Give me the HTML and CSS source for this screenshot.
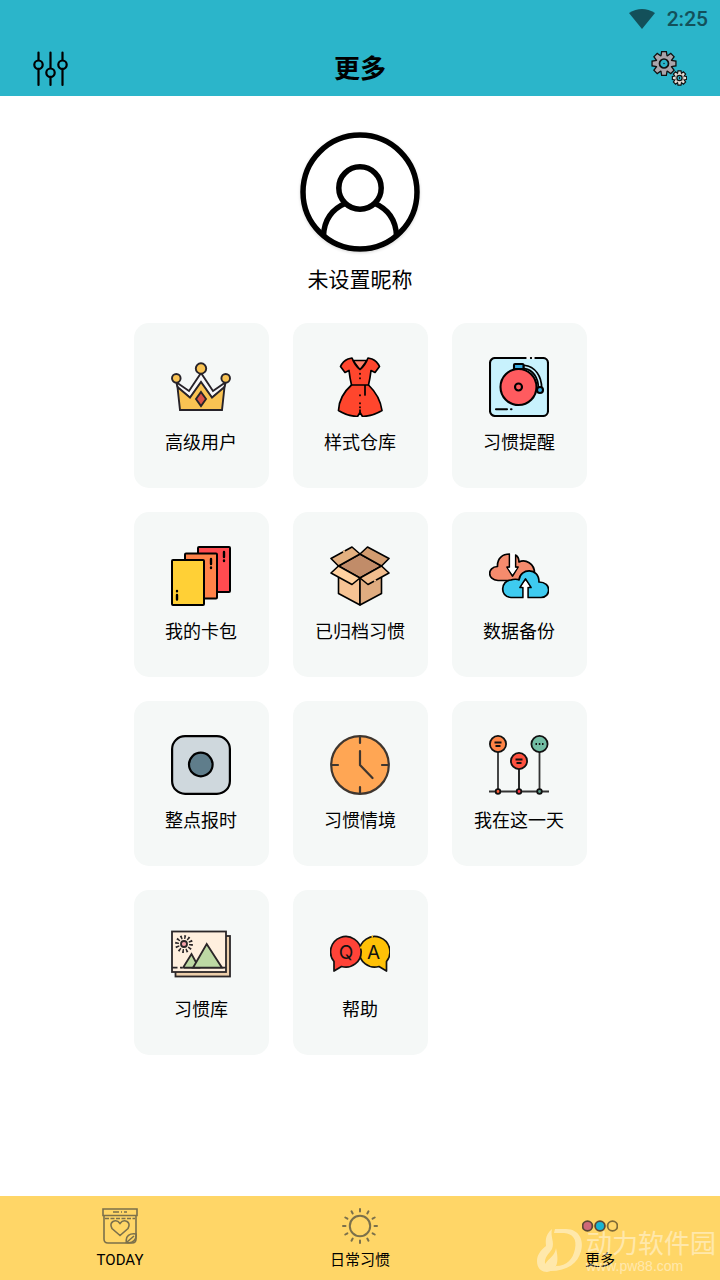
FILE: index.html
```html
<!DOCTYPE html>
<html lang="zh-CN">
<head>
	<meta charset="UTF-8">
	<meta name="viewport" content="width=device-width, initial-scale=1.0">
	<title>更多</title>
	<link rel="stylesheet" href="styles.css">
</head>
<body>
	<header>
		<div class="status-bar">
			<svg class="wifi" viewBox="0 0 26 21" aria-hidden="true"><path d="M0 4Q13-4 26 4L13 20Z" fill="#13505a"/></svg>
			<span class="time">2:25</span>
		</div>
		<div class="title-bar">
			<button class="icon-button" aria-label="筛选">
				<svg viewBox="0 0 36 36" fill="none" stroke="#000" stroke-width="2.2" stroke-linecap="round">
					<path d="M5.500 1.500V9M5.500 18.500V34M17.500 1.500V17M17.500 26.500V34M29.500 1.500V9M29.500 18.500V34"/>
					<circle cx="5.500" cy="13.700" r="4.200"/><circle cx="17.500" cy="21.700" r="4.200"/><circle cx="29.500" cy="13.700" r="4.200"/>
				</svg>
			</button>
			<h1>更多</h1>
			<button class="icon-button" aria-label="设置">
				<svg viewBox="0 0 36 36">
					<defs>
						<g id="teeth">
							<path id="tooth" d="M-2.500-7L-1.800-11.300H1.800L2.500-7M-2.500 7L-1.800 11.300H1.800L2.500 7"/>
							<use href="#tooth" transform="rotate(45)"/>
							<use href="#tooth" transform="rotate(90)"/>
							<use href="#tooth" transform="rotate(135)"/>
						</g>
					</defs>
					<g transform="translate(13 12.500)">
						<use href="#teeth" fill="#aaa5ab" stroke="#111" stroke-width="2.600"/>
						<circle r="8.500" fill="#aaa5ab" stroke="#111" stroke-width="1.700"/>
						<use href="#teeth" fill="#aaa5ab"/>
						<circle r="4.500" fill="#2bb5ca" stroke="#111" stroke-width="1.700"/>
						<circle r=".7" fill="#111"/>
					</g>
					<g transform="translate(28.500 27) scale(.58)">
						<use href="#teeth" fill="#e5dfd8" stroke="#111" stroke-width="4"/>
						<circle r="8.500" fill="#e5dfd8" stroke="#111" stroke-width="2.500"/>
						<use href="#teeth" fill="#e5dfd8"/>
						<circle r="4.500" fill="#2bb5ca" stroke="#111" stroke-width="2.200"/>
						<path d="M0-2V2" stroke="#111" stroke-width="1.500"/>
					</g>
				</svg>
			</button>
		</div>
	</header>
	<main>
		<section class="profile">
			<button class="avatar" aria-label="头像">
				<svg viewBox="0 0 120 120" fill="none" stroke="#000" stroke-width="5.500">
					<circle cx="60" cy="60" r="57"/>
					<circle cx="60" cy="56" r="21.200"/>
					<path d="M23.500 104C24 88 32 77 46 71M96.500 104C96 88 88 77 74 71"/>
				</svg>
			</button>
			<p class="nickname">未设置昵称</p>
		</section>
		<section class="menu">
			<button class="card">
				<svg viewBox="0 0 60 60" stroke="#272329" stroke-width="1.900">
					<path fill="#f8f8fa" d="M5 25L18 34 30 16 42 34 55 25 53 31 41 41 30 26 19 41 7 31Z"/>
					<path fill="#f9c353" d="M6.500 30L19 40.500 30 25 41 40.500 53.500 30 51 53H9Z"/>
					<path fill="#d95247" d="M30 35L35 42 30 49 25 42Z"/>
					<circle fill="#f9c353" cx="30" cy="11.500" r="5.200"/>
					<circle fill="#f9c353" cx="5.300" cy="21.300" r="4.300"/>
					<circle fill="#f9c353" cx="54.700" cy="21.300" r="4.300"/>
				</svg>
				<span>高级用户</span>
			</button>
			<button class="card">
				<svg viewBox="0 0 60 60" stroke="#000" stroke-width="1.700" stroke-linejoin="round" stroke-linecap="round">
					<path fill="#ff8069" d="M23 3.500H37L30 13Z"/>
					<path fill="#ff462d" d="M22 1L18 2Q13 4 10.500 9.500L15 15.500 19 13.500Q20 22 21.500 28Q9 39 8.500 53.500Q17 59 27.500 59.500L30 55.500 32.500 59.500Q43 59 52 53.500Q50 39 38.500 28Q40 22 41 13.500L45 15.500 49.500 9.500Q47 4 42 2L38 1Q35 9 30 12.500Q25 9 22 1Z"/>
					<path fill="none" d="M21.500 28H38.500M35 28V38M30 55V53"/>
					<path fill="none" d="M30 16.500V17M30 21V21.500M30 38V38.500M30 46V46.500M30 50V50.500"/>
				</svg>
				<span>样式仓库</span>
			</button>
			<button class="card">
				<svg viewBox="0 0 60 60" stroke="#000" stroke-width="2.100" stroke-linecap="round" stroke-linejoin="round">
					<rect x="1" y="1" width="58" height="58" rx="5" fill="#c8f2fd"/>
					<path d="M38.500 1H40M44 1H44.500" stroke="#f5f8f7" stroke-width="2.400"/>
					<circle cx="29.500" cy="30" r="18" fill="#ff5b5f"/>
					<circle cx="29.500" cy="30" r="3.500" fill="#ff5b5f"/>
					<path d="M35 10C45 11 51 20 51 31" fill="none" stroke-width="5"/>
					<path d="M36 10C45 11 51 20 51 31" fill="none" stroke="#c8f2fd" stroke-width="1.500"/>
					<path d="M25 12V8Q25 7 26 7H33.500Q34.500 7 34.500 8V12Z" fill="#37ace1"/>
					<circle cx="51" cy="33" r="3" fill="#37ace1"/>
					<path d="M7 52.300H18M22 52.300H22.500"/>
				</svg>
				<span>习惯提醒</span>
			</button>
			<button class="card">
				<svg viewBox="0 0 60 60" stroke="#000" stroke-width="2" stroke-linecap="round">
					<rect x="27" y="1" width="32" height="45" rx="1" fill="#ff4b50"/>
					<path d="M53 6V11M53 14.500V15" stroke-width="2.400"/>
					<rect x="14" y="7.500" width="32" height="45" rx="1" fill="#ff8249"/>
					<path d="M40 13V18M40 21.500V22" stroke-width="2.400"/>
					<rect x="1" y="14" width="32" height="45" rx="1" fill="#ffd036"/>
					<path d="M6 45V45.300M6 49V53.500" stroke-width="2.400"/>
				</svg>
				<span>我的卡包</span>
			</button>
			<button class="card">
				<svg viewBox="0 0 60 60" stroke="#000" stroke-width="1.600" stroke-linejoin="round">
					<path fill="#f6c394" d="M8.500 20L30 32V59L8.500 47.500Z"/>
					<path fill="#e0ac80" d="M51.500 20L30 32V59L51.500 47.500Z"/>
					<path fill="#c18c69" d="M30 8L51.500 20 30 32 8.500 20Z"/>
					<path fill="#e3b080" d="M30 8L22 1 1 12.500 8.500 20Z"/>
					<path fill="#d29c70" d="M30 8L37.500 1 59 12.500 51.500 20Z"/>
					<path fill="#ffd1a0" d="M8.500 20L1 27 22 38.500 30 32Z"/>
					<path fill="#f1bd8e" d="M51.500 20L59 27 38 38.500 30 32Z"/>
					<path stroke="#e3b080" stroke-width="2" d="M13 6L15 4.900"/>
					<path stroke="#f1bd8e" stroke-width="2" d="M44 35.200L46 34"/>
				</svg>
				<span>已归档习惯</span>
			</button>
			<button class="card">
				<svg viewBox="0 0 60 60" stroke="#000" stroke-width="1.700" stroke-linejoin="round">
					<path fill="#f58b6d" d="M9 34.500C-2 34 -2 21 8.500 20.500C8 12 14 8 20.500 8V21H18L23.500 30 29 21H26.500V9Q30 11 30 16C36 13 46 17 45.500 28Q43 34.500 36 34.500Z"/>
					<path fill="#fff" stroke="none" d="M21.300 7H25.700V22H28L23.500 28.500 19 22H21.300Z"/>
					<path fill="#3ecbf0" d="M22 51.500C10 51 12 34 22 34C24 33 29 33 30 34C31 22 50 21 50 36C63 36 62 51.500 52 51.500H39V41.500H42L36.500 33 31 41.500H34V51.500Z"/>
					<path fill="#fff" stroke="none" d="M34.800 53V40.500H32.500L36.500 34.500 40.500 40.500H38.200V53Z"/>
				</svg>
				<span>数据备份</span>
			</button>
			<button class="card">
				<svg viewBox="0 0 60 60" stroke="#000" stroke-width="2.200">
					<rect x="1.100" y="1.100" width="57.800" height="57.800" rx="13" fill="#cfd8dd"/>
					<circle cx="29.800" cy="29.500" r="11.800" fill="#5f7d8b"/>
				</svg>
				<span>整点报时</span>
			</button>
			<button class="card">
				<svg viewBox="0 0 60 60" fill="none" stroke="#3f362f" stroke-width="2.200" stroke-linecap="round">
					<circle cx="30" cy="30" r="28.800" fill="#ffa654"/>
					<path d="M30 2V8M30 52V58M2 30H8M52 30H58M30 16V30L42.500 43"/>
				</svg>
				<span>习惯情境</span>
			</button>
			<button class="card">
				<svg viewBox="0 0 60 60" stroke="#111" stroke-width="1.800">
					<path d="M0 56.500H60M9 17V56M50.500 17V56" stroke="#333"/>
					<path d="M30 34V56"/>
					<circle cx="9" cy="9" r="8.100" fill="#ff8446"/>
					<circle cx="30" cy="26" r="8.100" fill="#ff513f"/>
					<circle cx="50.500" cy="9" r="8.100" fill="#72bda4"/>
					<path d="M5.500 7.500H12.500M6.500 11H11.500M26.500 24.500H33.500M27.500 28H32.500"/>
					<path d="M46.500 9H48M49.800 9H51.300M53 9H54.500"/>
					<circle cx="9" cy="56.500" r="2.300" fill="#ff633c"/>
					<circle cx="30" cy="56.500" r="2.300" fill="#ff3944"/>
					<circle cx="50.500" cy="56.500" r="2.300" fill="#5b9a88"/>
				</svg>
				<span>我在这一天</span>
			</button>
			<button class="card">
				<svg viewBox="0 0 60 60" stroke="#2b2628" stroke-width="1.800">
					<rect x="4.500" y="12" width="54.500" height="40.500" fill="#edcfab"/>
					<rect x="1" y="7.500" width="54" height="40.500" fill="#ffefde"/>
					<path d="M1 43.700H6.500M9 43.700H11M13 43.700H55"/>
					<path fill="#bdd9a4" d="M12 43.700L20.500 30 28 43.700Z"/>
					<path fill="#bdd9a4" d="M22 43.700L35.700 20 51 43.700Z"/>
					<circle cx="13" cy="20" r="3" fill="#f7a3ac"/>
					<circle cx="13" cy="20" r="7" fill="none" stroke-width="3.800" stroke-dasharray="1.600 2.065"/>
				</svg>
				<span>习惯库</span>
			</button>
			<button class="card">
				<svg viewBox="0 0 60 60" stroke="#111" stroke-width="1.700" stroke-linejoin="round">
					<path fill="#ffc107" d="M56.500 37.500A15.300 15.300 0 1 0 49 42.500L56.500 47Z"/>
					<path fill="#ff4338" d="M4 37.500A15.300 15.300 0 1 1 11.500 42.500L4 47Z"/>
					<path d="M30.800 22.500L31.500 24.500M41.500 12.700H43" stroke="#ffc107" stroke-width="2.200"/>
					<text class="letter" x="16" y="35">Q</text>
					<text class="letter" x="43.500" y="35">A</text>
				</svg>
				<span>帮助</span>
			</button>
		</section>
	</main>
	<nav>
		<a href="#today">
			<svg viewBox="0 0 36 36" fill="none" stroke="#7b704b" stroke-width="1.600">
				<path d="M1 1H35V7.500H1ZM2 7.500V31Q2 35 6 35H30Q34 35 34 31V7.500"/>
				<path d="M3 10.500H33" stroke-dasharray="4 1.500"/>
				<path d="M11 4H17M19 4H20M22 4H25"/>
				<path d="M18 27.500L10 20.500C6 14 14 10 18 15.500C22 10 30 14 26 20.500Z"/>
				<path d="M24.500 34.500C23 28 28 25 34 26C35 31 31 36 24.500 34.500L32 28"/>
			</svg>
			<span>TODAY</span>
		</a>
		<a href="#habits">
			<svg viewBox="0 0 36 36" fill="none" stroke="#7b704b" stroke-width="2" stroke-linecap="round">
				<circle cx="18" cy="18" r="10.200"/>
				<path d="M18 1V3.500M18 32.500V35M1 18H3.500M32.500 18H35M9.500 3.300L10.700 5.400M25.300 30.600L26.500 32.700M3.300 9.500L5.400 10.700M30.600 25.300L32.700 26.500M3.300 26.500L5.400 25.300M30.600 10.700L32.700 9.500M9.500 32.700L10.700 30.600M25.300 5.400L26.500 3.300"/>
			</svg>
			<span>日常习惯</span>
		</a>
		<a href="#more">
			<svg viewBox="0 0 36 36" stroke="#5c4934" stroke-width="1.800">
				<circle cx="5.500" cy="18" r="4.900" fill="#cf6878"/>
				<circle cx="18" cy="18" r="4.900" fill="#19b5d2"/>
				<circle cx="30.500" cy="18" r="4.900" fill="#ffd667" stroke="#806b36"/>
			</svg>
			<span>更多</span>
		</a>
		<div class="watermark" aria-hidden="true">
			<svg viewBox="0 0 48 46" fill="#fff">
				<path d="M19 1H30C43 1 48 12 45 23C42 35 32 43 14 43L20 38C31 38 37 31 39 21C41 11 37 6 28 5H18Z"/>
				<path d="M16 1C8 8 10 14 10 18C4 23 1 27 1 33C1 40 5 44 11 44C22 42 23 33 20 20C19 28 13 30 9 36C8 29 13 26 16 21C19 14 14 9 16 1Z"/>
			</svg>
			<div>
				<p class="mark-name">动力软件园</p>
				<p class="mark-url">www.pw88.com</p>
			</div>
		</div>
	</nav>
</body>
</html>
```
FILE: styles.css
```css
* {
	margin: 0;
	padding: 0;
	box-sizing: border-box;
}
body {
	display: flex;
	flex-direction: column;
	min-height: 100vh;
	background-color: #fff;
	color: #000;
	font-family: Roboto, "Noto Sans CJK SC", sans-serif;
}
button {
	border: none;
	background: none;
	color: inherit;
	font-family: inherit;
	cursor: pointer;
}
svg {
	display: block;
}

header {
	background-color: #2bb5ca;
}
.status-bar {
	display: flex;
	justify-content: flex-end;
	align-items: center;
	gap: 12px;
	height: 38px;
	padding: 0 12px;
}
.wifi {
	width: 26px;
	height: 21px;
}
.time {
	color: #13505a;
	font-size: 21px;
	font-weight: 500;
}
.title-bar {
	display: flex;
	justify-content: space-between;
	align-items: center;
	padding: 13px 33px 9px;
}
.title-bar h1 {
	font-size: 26px;
	line-height: 36px;
}
.icon-button svg {
	width: 36px;
	height: 36px;
}

main {
	flex: 1;
	padding: 36px 24px;
}
.profile {
	display: flex;
	flex-direction: column;
	align-items: center;
	margin-bottom: 27px;
}
.avatar {
	border-radius: 50%;
	box-shadow: 0 1px 3px rgba(0, 0, 0, 0.15);
}
.avatar svg {
	width: 120px;
	height: 120px;
}
.nickname {
	margin-top: 12px;
	font-size: 21px;
	line-height: 32px;
}
.menu {
	display: grid;
	grid-template-columns: repeat(3, 1fr);
	gap: 24px;
	max-width: 453px;
	margin: 0 auto;
}
.card {
	display: flex;
	flex-direction: column;
	align-items: center;
	gap: 14px;
	padding: 34px 0 33px;
	border-radius: 15px;
	background-color: #f5f8f7;
	font-size: 18px;
	line-height: 24px;
}
.card svg {
	width: 60px;
	height: 60px;
}
.letter {
	fill: #111;
	stroke: none;
	font-family: Inter, sans-serif;
	font-size: 19px;
	font-weight: 400;
	text-anchor: middle;
}

nav {
	position: relative;
	display: flex;
	background-color: #ffd667;
}
nav a {
	flex: 1;
	display: flex;
	flex-direction: column;
	align-items: center;
	gap: 4px;
	padding: 12px 0 8px;
	color: #000;
	font-size: 15px;
	line-height: 24px;
	text-decoration: none;
}
nav a svg {
	width: 36px;
	height: 36px;
}
.watermark {
	position: absolute;
	right: 4px;
	bottom: 6px;
	display: flex;
	align-items: center;
	gap: 2px;
	color: #fff;
	opacity: 0.45;
	pointer-events: none;
}
.watermark svg {
	width: 48px;
	height: 46px;
}
.mark-name {
	font-size: 26px;
	line-height: 30px;
}
.mark-url {
	font-family: "Liberation Sans", sans-serif;
	font-size: 14px;
	line-height: 14px;
}
```
